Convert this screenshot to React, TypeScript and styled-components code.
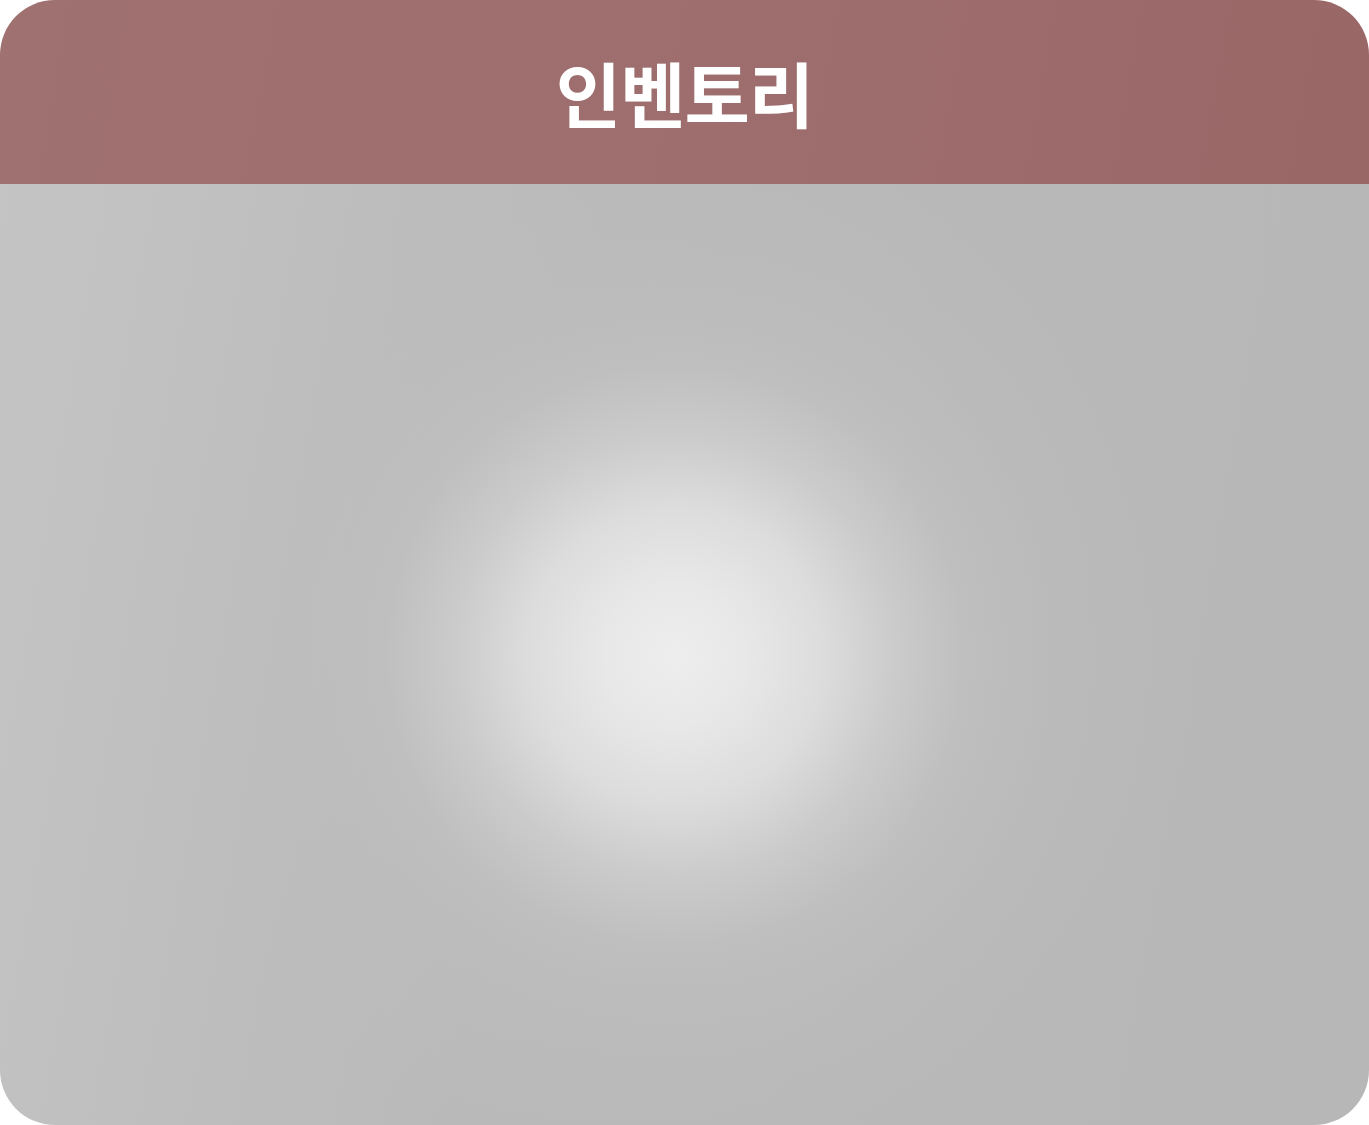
import React from 'react';
import styled, { createGlobalStyle } from 'styled-components';

const GlobalStyle = createGlobalStyle`
    html, body {
        margin: 0;
        padding: 0;
        background: #ffffff;
    }
    body {
        font-family: "Noto Sans CJK KR", "Noto Sans", sans-serif;
    }
`;

const Panel = styled.div`
    width: 1369px;
    height: 1125px;
    border-radius: 55px;
    overflow: hidden;
    display: flex;
    flex-direction: column;
`;

const Header = styled.header`
    height: 184px;
    flex-shrink: 0;
    display: flex;
    align-items: center;
    justify-content: center;
    background: linear-gradient(100deg, #a07171 0%, #9e6e6e 50%, #9a6767 100%);
`;

const Title = styled.h1`
    margin: 0;
    padding-bottom: 2px;
    font-size: 71px;
    font-weight: 700;
    color: #ffffff;
    letter-spacing: -1px;
    line-height: 1;
`;

const Body = styled.main`
    flex: 1;
    background:
        radial-gradient(circle at 675px 471px, #ededed 0px, #e8e8e8 70px, #dcdcdc 150px, #cbcbcb 220px, #bfbfbf 290px, rgba(190, 190, 190, 0.35) 380px, rgba(185, 185, 185, 0) 520px),
        linear-gradient(100deg, #c4c4c4 0%, #b9b9b9 40%, #b7b7b7 100%);
`;

export default function App() {
    return (
        <>
            <GlobalStyle />
            <Panel>
                <Header>
                    <Title>인벤토리</Title>
                </Header>
                <Body />
            </Panel>
        </>
    );
}
